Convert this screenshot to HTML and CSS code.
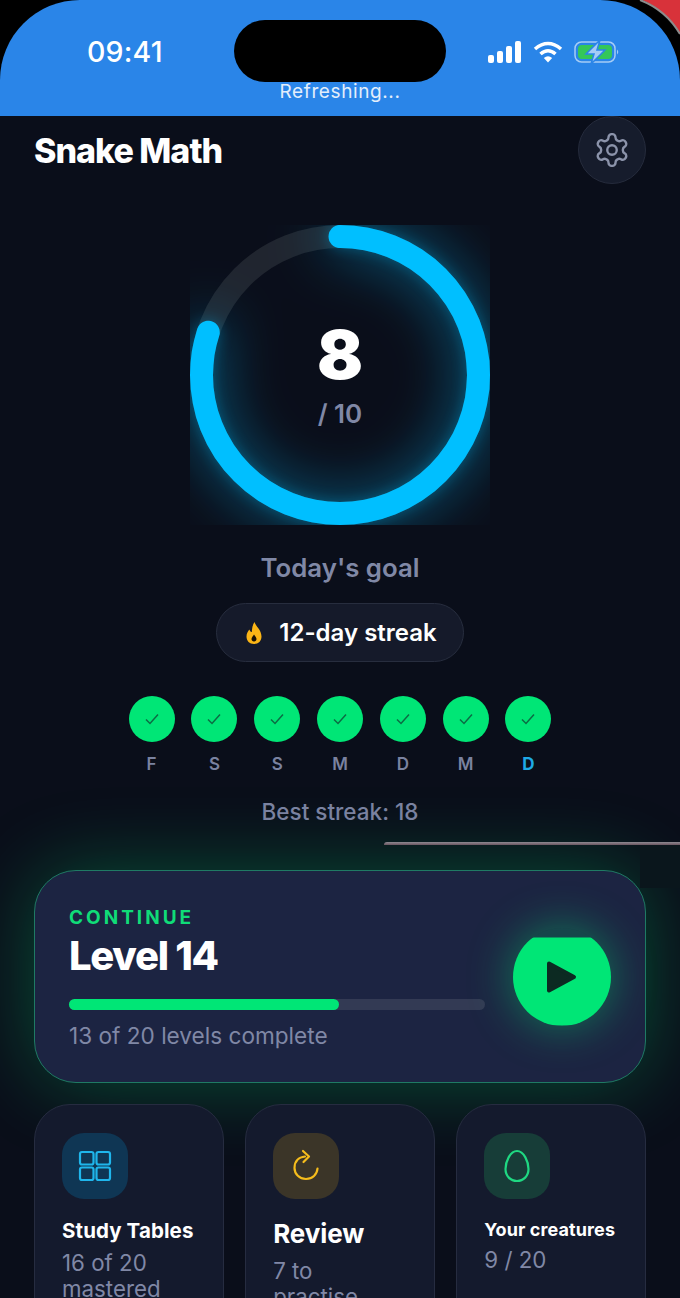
FILE: index.html
```html
<!DOCTYPE html>
<html lang="en">
<head>
<meta charset="utf-8">
<title>Snake Math</title>
<link rel="stylesheet" href="styles.css">
</head>
<body>
<div class="phone">
  <svg class="bezel" width="60" height="60" viewBox="0 0 60 60" aria-hidden="true">
    <path d="M22 0H60V34Q46 10 22 0Z" fill="#d8323a"/>
    <path d="M20 0Q46 10 60 34" fill="none" stroke="#8c8c8c" stroke-width="2"/>
  </svg>
  <header class="status">
    <div class="status-row">
      <span class="time">09:41</span>
      <div class="island"></div>
      <div class="status-icons">
        <svg width="34" height="22" viewBox="0 0 34 22" fill="#fff" aria-hidden="true">
          <rect x="0" y="14" width="6" height="8" rx="2"/>
          <rect x="9" y="10" width="6" height="12" rx="2"/>
          <rect x="18" y="5" width="6" height="17" rx="2"/>
          <rect x="27" y="0" width="6" height="22" rx="2"/>
        </svg>
        <svg width="30" height="22" viewBox="0 0 30 22" fill="none" stroke="#fff" stroke-width="3.6" aria-hidden="true">
          <path d="M2 8Q15 -3 28 8"/>
          <path d="M7.5 13Q15 6.500 22.500 13"/>
          <path d="M15 21.500L10.800 17Q15 13.500 19.200 17Z" fill="#fff" stroke="none"/>
        </svg>
        <svg width="46" height="24" viewBox="0 0 46 24" aria-hidden="true">
          <rect x="1" y="2" width="40" height="20" rx="6.500" fill="none" stroke="#a5ccf5" stroke-width="1.500"/>
          <rect x="4" y="5" width="34" height="14" rx="4" fill="#34c759"/>
          <path d="M43 9.500Q45.500 12 43 14.500Z" fill="#a5ccf5"/>
          <path d="M26 0L12 14H20L17 24L31 10H23Z" fill="#a5ccf5" stroke="#2a85e8" stroke-width="1.500"/>
        </svg>
      </div>
    </div>
    <div class="refresh">Refreshing...</div>
  </header>

  <main class="main">
    <div class="top-bar">
      <h1 class="brand">Snake Math</h1>
      <button class="gear" type="button" aria-label="Settings">
        <svg width="38" height="38" viewBox="0 0 24 24" fill="none" stroke="#8b93aa" stroke-width="1.500" stroke-linecap="round" stroke-linejoin="round">
          <path d="M12.220 2h-.44a2 2 0 0 0-2 2v.18a2 2 0 0 1-1 1.730l-.43.25a2 2 0 0 1-2 0l-.15-.08a2 2 0 0 0-2.730.73l-.22.38a2 2 0 0 0 .73 2.730l.15.1a2 2 0 0 1 1 1.720v.51a2 2 0 0 1-1 1.740l-.15.09a2 2 0 0 0-.73 2.730l.22.38a2 2 0 0 0 2.730.73l.15-.08a2 2 0 0 1 2 0l.43.25a2 2 0 0 1 1 1.730V20a2 2 0 0 0 2 2h.44a2 2 0 0 0 2-2v-.18a2 2 0 0 1 1-1.730l.43-.25a2 2 0 0 1 2 0l.15.08a2 2 0 0 0 2.730-.73l.22-.39a2 2 0 0 0-.73-2.730l-.15-.08a2 2 0 0 1-1-1.740v-.5a2 2 0 0 1 1-1.740l.15-.09a2 2 0 0 0 .73-2.730l-.22-.38a2 2 0 0 0-2.730-.73l-.15.08a2 2 0 0 1-2 0l-.43-.25a2 2 0 0 1-1-1.730V4a2 2 0 0 0-2-2z"/>
          <circle cx="12" cy="12" r="3"/>
        </svg>
      </button>
    </div>

    <section class="goal">
      <div class="ring">
        <svg class="ring-svg" width="300" height="300" viewBox="0 0 300 300" aria-hidden="true">
          <circle class="ring-track" cx="150" cy="150" r="138.500"/>
          <circle class="ring-value" cx="150" cy="150" r="138.500" pathLength="100" stroke-dasharray="80 100" transform="rotate(-90 150 150)"/>
        </svg>
        <div class="ring-text">
          <span class="ring-num">8</span>
          <span class="ring-den">/ 10</span>
        </div>
      </div>
      <p class="goal-label">Today's goal</p>
      <div class="pill">
        <svg width="18" height="24" viewBox="0 0 18 24" aria-hidden="true">
          <path d="M9.500 1C10.500 5 16.500 9 16.500 15.500C16.500 20 13.500 23 9 23C4.500 23 1.500 20 1.500 15.500C1.500 12.500 3 10 4.500 8.500C5 10.500 6 11 6.800 11C7 7.500 7.500 4 9.500 1Z" fill="#fbb516"/>
          <path d="M9 13.500C10 15 11.500 16.500 11.500 18C11.500 19.500 10.500 20.500 9 20.500C7.500 20.500 6.500 19.500 6.500 18C6.500 16.500 8 15 9 13.500Z" fill="#1a1206"/>
        </svg>
        <span>12-day streak</span>
      </div>
      <div class="days">
        <div class="day"><span class="dot"><svg class="tick" width="18" height="18" viewBox="0 0 18 18"><path d="M3 9.500L7 13.500L15 4.500"/></svg></span><span class="day-name">F</span></div>
        <div class="day"><span class="dot"><svg class="tick" width="18" height="18" viewBox="0 0 18 18"><path d="M3 9.500L7 13.500L15 4.500"/></svg></span><span class="day-name">S</span></div>
        <div class="day"><span class="dot"><svg class="tick" width="18" height="18" viewBox="0 0 18 18"><path d="M3 9.500L7 13.500L15 4.500"/></svg></span><span class="day-name">S</span></div>
        <div class="day"><span class="dot"><svg class="tick" width="18" height="18" viewBox="0 0 18 18"><path d="M3 9.500L7 13.500L15 4.500"/></svg></span><span class="day-name">M</span></div>
        <div class="day"><span class="dot"><svg class="tick" width="18" height="18" viewBox="0 0 18 18"><path d="M3 9.500L7 13.500L15 4.500"/></svg></span><span class="day-name">D</span></div>
        <div class="day"><span class="dot"><svg class="tick" width="18" height="18" viewBox="0 0 18 18"><path d="M3 9.500L7 13.500L15 4.500"/></svg></span><span class="day-name">M</span></div>
        <div class="day"><span class="dot"><svg class="tick" width="18" height="18" viewBox="0 0 18 18"><path d="M3 9.500L7 13.500L15 4.500"/></svg></span><span class="day-name today">D</span></div>
      </div>
      <p class="best">Best streak: 18</p>
    </section>

    <section class="continue">
      <div class="continue-body">
        <div class="eyebrow">CONTINUE</div>
        <div class="level">Level 14</div>
        <div class="bar"><div class="bar-fill" style="width:65%"></div></div>
        <div class="levels-note">13 of 20 levels complete</div>
      </div>
      <div class="play">
        <div class="play-disc">
          <svg width="32" height="34" viewBox="0 0 32 34" aria-hidden="true">
            <path d="M3 3.500L28 17L3 30.500Z" fill="#0c2a22" stroke="#0c2a22" stroke-width="4" stroke-linejoin="round"/>
          </svg>
        </div>
      </div>
    </section>

    <section class="tiles">
      <article class="tile">
        <div class="tile-icon icon-blue">
          <svg width="36" height="36" viewBox="0 0 36 36" fill="none" stroke="#1fb6ec" stroke-width="2.200">
            <rect x="3" y="4" width="13.500" height="12.500" rx="2"/>
            <rect x="19.500" y="4" width="13.500" height="12.500" rx="2"/>
            <rect x="3" y="19.500" width="13.500" height="12.500" rx="2"/>
            <rect x="19.500" y="19.500" width="13.500" height="12.500" rx="2"/>
          </svg>
        </div>
        <h2 class="tile-title t-study">Study Tables</h2>
        <p class="tile-sub">16 of 20 mastered</p>
      </article>
      <article class="tile">
        <div class="tile-icon icon-amber">
          <svg width="36" height="36" viewBox="0 0 36 36" fill="none" stroke="#f6bd1c" stroke-width="2.200" stroke-linecap="round" stroke-linejoin="round">
            <path d="M17 8.500C10.500 9 6.500 13.500 6.500 20C6.500 26 11.500 31 18 31C24.500 31 29 26.500 29.500 20.500"/>
            <path d="M15 3L21 8.500L15.500 14"/>
          </svg>
        </div>
        <h2 class="tile-title t-review">Review</h2>
        <p class="tile-sub">7 to practise</p>
      </article>
      <article class="tile">
        <div class="tile-icon icon-green">
          <svg width="36" height="36" viewBox="0 0 36 36" fill="none" stroke="#1fd882" stroke-width="2.200">
            <path d="M18 3C25 3 29.500 14 29.500 21C29.500 28 24.500 33 18 33C11.500 33 6.500 28 6.500 21C6.500 14 11 3 18 3Z"/>
          </svg>
        </div>
        <h2 class="tile-title t-creatures">Your creatures</h2>
        <p class="tile-sub">9 / 20</p>
      </article>
    </section>
  </main>

  <div class="glitch-line"></div>
  <div class="glitch-patch"></div>
</div>
</body>
</html>
```

FILE: styles.css
```css
* { box-sizing: border-box; }

html, body {
  margin: 0;
  padding: 0;
  background: #000;
}

body {
  width: 680px;
  height: 1298px;
  overflow: hidden;
  font-family: Inter, "Liberation Sans", sans-serif;
}

.phone {
  position: relative;
  width: 680px;
  height: 1298px;
  overflow: hidden;
}

.bezel {
  position: absolute;
  top: 0;
  right: 0;
}

.status {
  position: relative;
  height: 116px;
  padding-top: 20px;
  background: #2a85e8;
  border-radius: 80px 80px 0 0;
  color: #fff;
}

.status-row {
  display: flex;
  align-items: center;
  height: 62px;
  padding: 0 60px 0 87px;
}

.time {
  width: 147px;
  font-size: 28.500px;
  font-weight: 500;
  letter-spacing: .2px;
}

.island {
  width: 212px;
  height: 62px;
  border-radius: 31px;
  background: #000;
}

.status-icons {
  display: flex;
  align-items: center;
  gap: 11px;
  margin-left: 42px;
  margin-top: 2px;
}

.refresh {
  text-align: center;
  padding-top: 1px;
  font-size: 19px;
  line-height: 18px;
  letter-spacing: .6px;
  color: #e3eefb;
}

.main {
  height: 1182px;
  padding: 0 34px;
  background: #0a0e1a;
}

.top-bar {
  display: flex;
  align-items: center;
  justify-content: space-between;
  height: 68px;
}

.brand {
  margin: 0;
  font-size: 34px;
  font-weight: 800;
  letter-spacing: -1px;
  color: #fff;
}

.gear {
  display: flex;
  align-items: center;
  justify-content: center;
  width: 68px;
  height: 68px;
  padding: 0;
  border-radius: 50%;
  border: 1px solid #252b3c;
  background: #161c2c;
}

.goal {
  display: flex;
  flex-direction: column;
  align-items: center;
  padding-top: 41px;
}

.ring {
  position: relative;
  width: 300px;
  height: 300px;
}

.ring-svg {
  display: block;
  overflow: hidden;
}

.ring-track {
  fill: none;
  stroke: #20252f;
  stroke-width: 23px;
}

.ring-value {
  fill: none;
  stroke: #00bfff;
  stroke-width: 23px;
  stroke-linecap: round;
  filter: drop-shadow(0 0 7px rgba(0, 191, 255, .3)) drop-shadow(0 0 28px rgba(0, 191, 255, .6));
}

.ring-text {
  position: absolute;
  inset: 0;
  display: flex;
  flex-direction: column;
  align-items: center;
  justify-content: center;
}

.ring-num {
  font-size: 68px;
  line-height: 70px;
  font-weight: 900;
  color: #fff;
  margin-top: -2px;
}

.ring-den {
  font-size: 26px;
  line-height: 32px;
  font-weight: 600;
  color: #8088a6;
  margin-top: 9px;
}

.goal-label {
  margin: 27px 0 0;
  font-size: 25.800px;
  line-height: 32px;
  font-weight: 600;
  color: #8088a6;
}

.pill {
  display: flex;
  align-items: center;
  gap: 16px;
  height: 59px;
  margin-top: 19px;
  padding: 0 26px 0 28px;
  border-radius: 30px;
  border: 1px solid #272d3e;
  background: #151a2a;
  font-size: 24px;
  font-weight: 600;
  color: #fff;
}

.days {
  display: flex;
  gap: 16.800px;
  margin-top: 34px;
}

.day {
  display: flex;
  flex-direction: column;
  align-items: center;
  gap: 12px;
}

.dot {
  display: flex;
  align-items: center;
  justify-content: center;
  width: 46px;
  height: 46px;
  border-radius: 50%;
  background: #00e676;
}

.tick {
  fill: none;
  stroke: #0c6b44;
  stroke-width: 1.500;
}

.day-name {
  font-size: 17px;
  line-height: 21px;
  font-weight: 600;
  color: #7a82a0;
}

.today {
  font-weight: 700;
  color: #1ea9e6;
}

.best {
  margin: 24px 0 0;
  font-size: 22.500px;
  line-height: 26px;
  font-weight: 500;
  color: #7a82a0;
}

.continue {
  display: flex;
  align-items: center;
  justify-content: space-between;
  height: 213px;
  margin-top: 45px;
  padding: 0 34px;
  border: 1.500px solid #1f7a64;
  border-radius: 42px;
  background: #1c2442;
  box-shadow: 0 0 80px rgba(0, 230, 118, .3);
}

.continue-body {
  width: 416px;
  margin-top: 3px;
}

.eyebrow {
  font-size: 19px;
  line-height: 22px;
  font-weight: 700;
  letter-spacing: 3px;
  color: #10dc78;
}

.level {
  margin-top: 4px;
  font-size: 40px;
  line-height: 46px;
  font-weight: 800;
  letter-spacing: -1.300px;
  color: #fff;
}

.bar {
  height: 11px;
  margin-top: 20.500px;
  border-radius: 6px;
  background: #333a54;
}

.bar-fill {
  height: 100%;
  border-radius: 6px;
  background: #00e676;
}

.levels-note {
  margin-top: 11.500px;
  font-size: 22.600px;
  line-height: 28px;
  color: #8088a6;
}

.play {
  flex: none;
  width: 98px;
  height: 98px;
  border-radius: 50%;
  background: rgba(0, 230, 118, .18);
  box-shadow: 0 0 46px rgba(0, 230, 118, .45);
}

.play-disc {
  display: flex;
  align-items: center;
  justify-content: center;
  width: 98px;
  height: 98px;
  border-radius: 50%;
  background: #00e676;
  clip-path: inset(10px 0 0 0);
}

.tiles {
  display: grid;
  grid-template-columns: repeat(3, 1fr);
  gap: 21.500px;
  margin-top: 21px;
  align-items: start;
}

.tile {
  height: 240px;
  padding: 28px 14px 0 27px;
  border: 1px solid #262c40;
  border-radius: 36px;
  background: #141a2d;
}

.tile-icon {
  display: flex;
  align-items: center;
  justify-content: center;
  width: 66px;
  height: 66px;
  border-radius: 22px;
}

.icon-blue { background: #0f3654; }
.icon-amber { background: #3b3528; }
.icon-green { background: #173d38; }

.tile-title {
  margin: 0;
  font-weight: 700;
  color: #fff;
  white-space: nowrap;
}

.t-study {
  margin-top: 20px;
  font-size: 20.500px;
  line-height: 24px;
  letter-spacing: .1px;
}

.t-review {
  margin-top: 18px;
  font-size: 26px;
  line-height: 34px;
  letter-spacing: -.1px;
}

.t-creatures {
  margin-top: 21px;
  font-size: 18px;
  line-height: 20px;
  letter-spacing: .1px;
}

.tile-sub {
  max-width: 120px;
  margin: 7px 0 0;
  font-size: 22.300px;
  line-height: 26px;
  color: #8088a6;
}

.glitch-line {
  position: absolute;
  left: 384px;
  right: 0;
  top: 842px;
  height: 3px;
  background: linear-gradient(#8d8a92, #6b5560);
  border-radius: 3px 0 0 0;
}

.glitch-patch {
  position: absolute;
  left: 640px;
  top: 845px;
  width: 40px;
  height: 43px;
  background: #0a161c;
}
```
